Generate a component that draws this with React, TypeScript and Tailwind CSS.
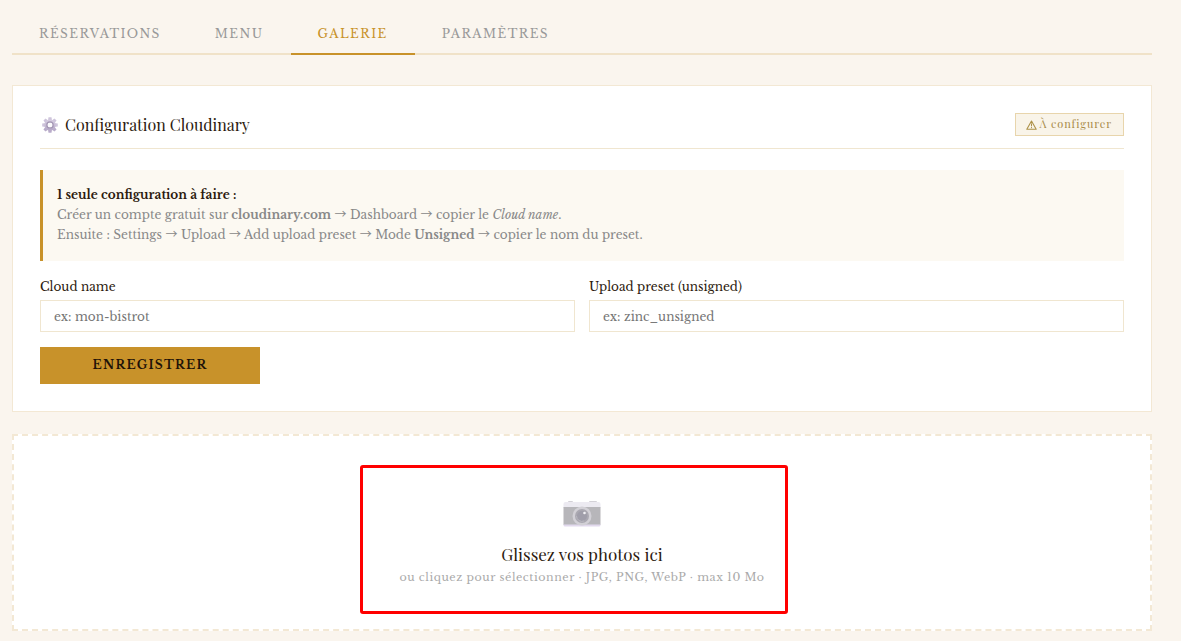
import { useState } from "react";

const TABS = ["Réservations", "Menu", "Galerie", "Paramètres"];

const TEETH = [0, 45, 90, 135, 180, 225, 270, 315];

function GearIcon() {
  return (
    <svg width="18" height="18" viewBox="0 0 18 18" aria-hidden="true">
      <defs>
        <linearGradient id="gear" x1="0" y1="0" x2="0" y2="1">
          <stop offset="0" stopColor="#d5cce0" />
          <stop offset="1" stopColor="#b9acca" />
        </linearGradient>
      </defs>
      {TEETH.map((angle) => (
        <path
          key={angle}
          d="M7 5 L7.5 1.2 H10.5 L11 5 Z"
          fill={angle > 90 && angle < 270 ? "#b9acca" : "#cec4db"}
          transform={`rotate(${angle} 9 9)`}
        />
      ))}
      <circle cx="9" cy="9" r="4.4" fill="none" stroke="url(#gear)" strokeWidth="2.4" />
      <circle cx="9" cy="9" r="3.1" fill="none" stroke="#a699b6" strokeWidth="1.5" />
      <circle cx="9" cy="9" r="2.3" fill="#fbfafc" />
    </svg>
  );
}

function WarningIcon() {
  return (
    <svg width="11" height="10" viewBox="0 0 11 10" fill="none" aria-hidden="true">
      <path d="M5.5 1 L10.2 9.2 H0.8 Z" stroke="#ad9148" strokeWidth="1.1" strokeLinejoin="round" />
      <path d="M5.5 3.4 V6.3 M5.5 7.1 V8.2" stroke="#ad9148" strokeWidth="1" />
    </svg>
  );
}

function CameraIcon() {
  return (
    <svg width="38" height="26" viewBox="0 0 38 26" aria-hidden="true">
      <rect x="5" y="0" width="5" height="2" rx="1" fill="#d3d1d7" />
      <rect x="26" y="0" width="8" height="2" rx="1" fill="#d3d1d7" />
      <path d="M.5 3 Q.5 1 2.5 1 H35.5 Q37.5 1 37.5 3 V7 H.5 Z" fill="#eceaf1" />
      <rect x=".5" y="6" width="37" height="18" fill="#b7b6ba" />
      <path d="M.5 23.500 H37.5 V24 Q37.5 25.5 36 25.5 H2 Q.5 25.5 .5 24 Z" fill="#e2d9ed" />
      <circle cx="19" cy="15" r="9.5" fill="#d2d0d6" />
      <circle cx="19" cy="15" r="7" fill="#aaa8b1" />
      <circle cx="19" cy="15" r="5" fill="#a09eaa" />
      <path d="M13.5 15 A5.5 5.5 0 0 0 21 20" fill="none" stroke="#b9b7c0" strokeWidth="1" />
      <circle cx="21.5" cy="12" r="1.3" fill="#f2f1f5" />
    </svg>
  );
}

function Arrow() {
  return <span className="font-['Noto_Sans_CJK_SC',sans-serif] leading-none">→</span>;
}

function Field({ id, label, placeholder }: { id: string; label: string; placeholder: string }) {
  return (
    <div className="flex flex-col gap-[3px]">
      <label htmlFor={id} className="text-[12px] leading-5 text-[#2c1a0e]">
        {label}
      </label>
      <input
        id={id}
        type="text"
        placeholder={placeholder}
        className="h-8 w-full border border-[#f0e6d0] bg-white px-[13px] text-[12px] text-[#2c1a0e] outline-none placeholder:text-[#757575] focus:border-[#c8922a]"
      />
    </div>
  );
}

export default function App() {
  const [active, setActive] = useState("Galerie");

  return (
    <main className="min-h-screen bg-[#faf5ee] pt-3 pr-[29px] pb-[10px] pl-3 font-['Libre_Baskerville','Liberation_Serif',serif] text-[#2c1a0e]">
      <nav className="flex border-b-2 border-[#f0e2c8]">
        {TABS.map((tab) => (
          <button
            key={tab}
            type="button"
            onClick={() => setActive(tab)}
            className={`-mb-[2px] h-[43px] border-b-2 px-[27px] pt-[2px] text-[12px] tracking-[0.12em] uppercase ${
              tab === active ? "border-[#c8922a] text-[#c8922a]" : "border-transparent text-[#999999]"
            }`}
          >
            {tab}
          </button>
        ))}
      </nav>

      <section className="mt-[30px] border border-[#f3e8d4] bg-white p-[27px]">
        <header className="flex items-start justify-between border-b border-[#f0e6d0] pb-[11px]">
          <h2 className="flex items-center gap-[6px] pl-px font-['Playfair_Display','Liberation_Serif',serif] text-[16px] leading-6">
            <GearIcon />
            Configuration Cloudinary
          </h2>
          <span className="flex h-[23px] items-center gap-[3px] border border-[#e8d5ac] bg-[#f9f4e9] pr-[11px] pl-[10px] font-['Playfair_Display','Liberation_Serif',serif] text-[11px] tracking-[0.08em] text-[#a88a48]">
            <WarningIcon />À configurer
          </span>
        </header>

        <div className="mt-[21px] border-l-3 border-[#c8922a] bg-[#fcf9f2] px-[14px] pt-[15px] pb-4 text-[12px] leading-5 text-[#888888]">
          <p className="font-bold text-[#2c1a0e]">1 seule configuration à faire :</p>
          <p>
            Créer un compte gratuit sur <strong>cloudinary.com</strong> <Arrow /> Dashboard <Arrow /> copier le{" "}
            <em>Cloud name</em>.
          </p>
          <p>
            Ensuite : Settings <Arrow /> Upload <Arrow /> Add upload preset <Arrow /> Mode <strong>Unsigned</strong>{" "}
            <Arrow /> copier le nom du preset.
          </p>
        </div>

        <form onSubmit={(event) => event.preventDefault()} className="mt-4">
          <div className="grid grid-cols-2 gap-[14px]">
            <Field id="cloud-name" label="Cloud name" placeholder="ex: mon-bistrot" />
            <Field id="upload-preset" label="Upload preset (unsigned)" placeholder="ex: zinc_unsigned" />
          </div>
          <button
            type="submit"
            className="mt-[15px] h-[37px] w-[220px] bg-[#c8922a] pb-[2px] text-[12px] font-bold tracking-widest text-[#1f1308] uppercase"
          >
            Enregistrer
          </button>
        </form>
      </section>

      <section className="relative mt-[22px] border-2 border-dashed border-[#f3e8d4] bg-white">
        <label htmlFor="photos" className="flex h-[193px] cursor-pointer flex-col items-center pt-[65px]">
          <CameraIcon />
          <span className="mt-[15px] font-['Playfair_Display','Liberation_Serif',serif] text-[17px] leading-6">
            Glissez vos photos ici
          </span>
          <span className="text-[11px] leading-[22px] tracking-wider text-[#aaaaaa]">
            ou cliquez pour sélectionner · JPG, PNG, WebP · max 10 Mo
          </span>
        </label>
        <input id="photos" type="file" accept="image/*" multiple className="sr-only" />
        <div className="pointer-events-none absolute top-[29px] left-1/2 -ml-[222px] h-[149px] w-[428px] rounded-[3px] border-3 border-[#ff0000]" />
      </section>
    </main>
  );
}
